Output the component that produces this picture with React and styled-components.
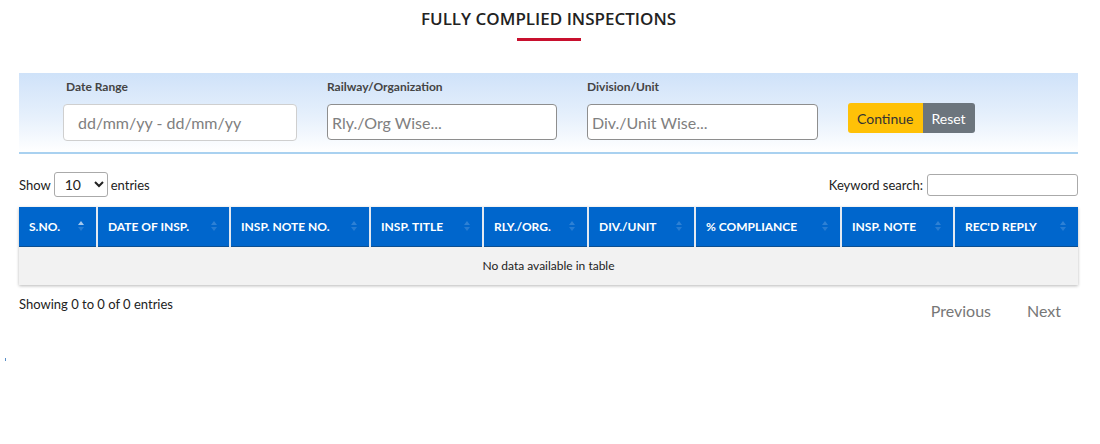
import React from 'react';
import styled, { createGlobalStyle } from 'styled-components';

const GlobalStyle = createGlobalStyle`
  body {
    margin: 0;
    background: #ffffff;
    font-family: 'Lato', 'Liberation Sans', sans-serif;
    color: #333;
  }
`;

/* Page */

const Page = styled.div`
  padding: 0 22px 0 19px;
  position: relative;
  height: 444px;
`;

const TitleBlock = styled.div`
  display: flex;
  flex-direction: column;
  align-items: center;
  padding-top: 8px;
`;

const Title = styled.h2`
  margin: 0;
  font-family: 'Open Sans', 'Noto Sans', sans-serif;
  font-size: 17px;
  font-weight: 600;
  color: #222;
  line-height: 22px;
`;

const Underline = styled.div`
  width: 64px;
  height: 3px;
  background: #c8102e;
  margin-top: 8px;
`;

/* Filter panel */

const FilterPanel = styled.section`
  margin-top: 32px;
  background: linear-gradient(to bottom, #cfe2f9 0%, #e6f0fc 55%, #ffffff 100%);
  border-bottom: 2px solid #a9d1f0;
  display: grid;
  grid-template-columns: 234px 230px 231px auto;
  column-gap: 30px;
  padding: 6px 0 11px 44px;
`;

const Field = styled.div`
  display: flex;
  flex-direction: column;
`;

const Label = styled.label`
  font-size: 12px;
  font-weight: 700;
  color: #444;
  line-height: 15px;
  padding-left: ${(p) => p.indent || 0}px;
  margin-bottom: 10px;
`;

const TextInput = styled.input`
  box-sizing: border-box;
  height: ${(p) => p.h || 36}px;
  width: 100%;
  border: 1px solid ${(p) => (p.dark ? '#8e8e8e' : '#cfcfcf')};
  border-radius: 4px;
  padding: 0 ${(p) => p.pad || 4}px;
  font-family: 'Lato', 'Liberation Sans', sans-serif;
  font-size: 16px;
  color: #333;
  background: #fff;
  outline: none;
  &::placeholder {
    color: #808080;
  }
`;

const ButtonGroup = styled.div`
  display: flex;
  align-self: start;
  margin-top: 24px;
`;

const Button = styled.button`
  height: 30px;
  border: none;
  padding: 0 ${(p) => p.px || 9}px;
  background: ${(p) => p.bg};
  color: ${(p) => p.fg};
  font-family: 'Lato', 'Liberation Sans', sans-serif;
  font-size: 14px;
  border-radius: ${(p) => p.radius};
  cursor: pointer;
`;

/* Table controls */

const Controls = styled.div`
  display: flex;
  justify-content: space-between;
  align-items: center;
  margin-top: 18px;
  font-size: 13px;
  color: #222;
`;

const Inline = styled.div`
  display: flex;
  align-items: center;
  gap: 3px;
`;

const Select = styled.select`
  height: 25px;
  width: 54px;
  border: 1px solid #aaa;
  border-radius: 3px;
  font-family: 'Lato', 'Liberation Sans', sans-serif;
  font-size: 14px;
  padding: 0 6px;
  background: #fff;
  color: #222;
`;

const SearchInput = styled.input`
  box-sizing: border-box;
  width: 151px;
  height: 22px;
  border: 1px solid #aaa;
  border-radius: 3px;
  margin-left: 1px;
`;

/* Table */

const TableWrap = styled.div`
  margin-top: 10px;
  box-shadow: 0 1px 3px rgba(0, 0, 0, 0.28);
`;

const Table = styled.table`
  width: 100%;
  border-collapse: collapse;
  table-layout: fixed;
`;

const Th = styled.th`
  position: relative;
  background: #0066cc;
  color: #fff;
  font-size: 12px;
  font-weight: 700;
  text-align: left;
  height: 39px;
  padding: 0 10px;
  border-left: 2px solid #e3e9f1;
  border-bottom: 1px solid #0c4f91;
  box-sizing: border-box;
  white-space: nowrap;
  &:first-child {
    border-left: none;
  }
`;

const SortIcon = styled.span`
  position: absolute;
  right: 12px;
  top: 50%;
  transform: translateY(-50%);
  display: flex;
  flex-direction: column;
  gap: 2px;
`;

const Arrow = styled.span`
  width: 0;
  height: 0;
  border-left: 3px solid transparent;
  border-right: 3px solid transparent;
  ${(p) =>
    p.up
      ? `border-bottom: 4px solid ${p.active ? 'rgba(255,255,255,0.65)' : 'rgba(255,255,255,0.18)'};`
      : `border-top: 4px solid rgba(255,255,255,0.15);`}
`;

const EmptyCell = styled.td`
  background: #f2f2f2;
  text-align: center;
  font-size: 12px;
  color: #222;
  height: 36px;
`;

const Footer = styled.div`
  display: flex;
  justify-content: space-between;
  align-items: flex-start;
  margin-top: 11px;
`;

const Info = styled.div`
  font-size: 13px;
  color: #222;
`;

const Pager = styled.div`
  display: flex;
  gap: 36px;
  margin-top: 5px;
  padding-right: 17px;
`;

const PageLink = styled.span`
  font-size: 16px;
  color: #777;
`;

const Dot = styled.span`
  position: absolute;
  left: 5px;
  top: 358px;
  width: 1px;
  height: 3px;
  background: #5a8fc8;
`;

const columns = [
  { name: 'S.NO.', w: 78, active: true },
  { name: 'DATE OF INSP.', w: 133 },
  { name: 'INSP. NOTE NO.', w: 140 },
  { name: 'INSP. TITLE', w: 113 },
  { name: 'RLY./ORG.', w: 105 },
  { name: 'DIV./UNIT', w: 107 },
  { name: '% COMPLIANCE', w: 146 },
  { name: 'INSP. NOTE', w: 113 },
  { name: "REC'D REPLY", w: 124 },
];

export default function App() {
  return (
    <>
      <GlobalStyle />
      <Page>
        <TitleBlock>
          <Title>FULLY COMPLIED INSPECTIONS</Title>
          <Underline />
        </TitleBlock>

        <FilterPanel>
          <Field>
            <Label indent={3}>Date Range</Label>
            <TextInput placeholder="dd/mm/yy - dd/mm/yy" pad={14} h={37} />
          </Field>
          <Field>
            <Label>Railway/Organization</Label>
            <TextInput placeholder="Rly./Org Wise..." dark />
          </Field>
          <Field>
            <Label>Division/Unit</Label>
            <TextInput placeholder="Div./Unit Wise..." dark />
          </Field>
          <ButtonGroup>
            <Button bg="#ffc107" fg="#333" radius="3px 0 0 3px" px={9}>
              Continue
            </Button>
            <Button bg="#6c757d" fg="#fff" radius="0 3px 3px 0" px={9}>
              Reset
            </Button>
          </ButtonGroup>
        </FilterPanel>

        <Controls>
          <Inline>
            Show
            <Select defaultValue="10">
              <option>10</option>
              <option>25</option>
              <option>50</option>
              <option>100</option>
            </Select>
            entries
          </Inline>
          <Inline>
            Keyword search:
            <SearchInput />
          </Inline>
        </Controls>

        <TableWrap>
          <Table>
            <colgroup>
              {columns.map((c) => (
                <col key={c.name} style={{ width: c.w }} />
              ))}
            </colgroup>
            <thead>
              <tr>
                {columns.map((c) => (
                  <Th key={c.name}>
                    {c.name}
                    <SortIcon>
                      <Arrow up active={c.active} />
                      <Arrow />
                    </SortIcon>
                  </Th>
                ))}
              </tr>
            </thead>
            <tbody>
              <tr>
                <EmptyCell colSpan={columns.length}>No data available in table</EmptyCell>
              </tr>
            </tbody>
          </Table>
        </TableWrap>

        <Footer>
          <Info>Showing 0 to 0 of 0 entries</Info>
          <Pager>
            <PageLink>Previous</PageLink>
            <PageLink>Next</PageLink>
          </Pager>
        </Footer>
        <Dot />
      </Page>
    </>
  );
}
